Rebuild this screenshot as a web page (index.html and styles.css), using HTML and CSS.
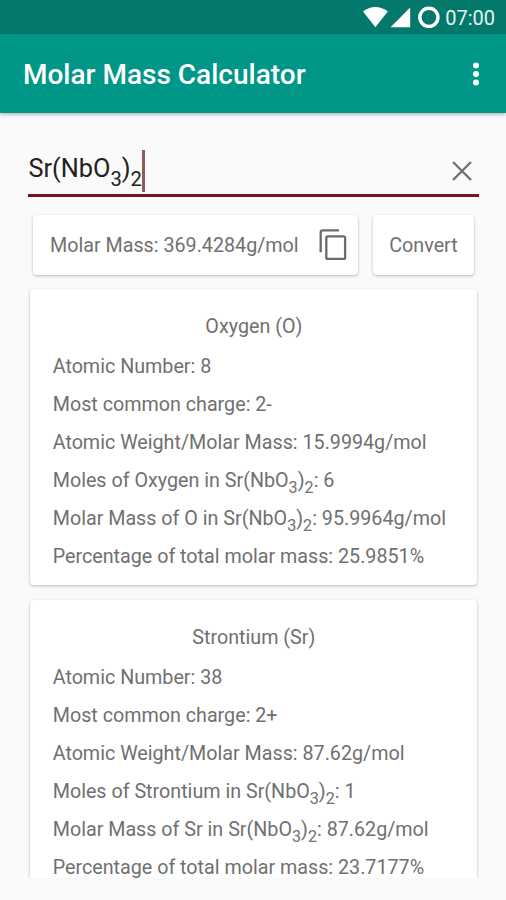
FILE: index.html
```html
<!DOCTYPE html>
<html lang="en">
<head>
<meta charset="utf-8">
<title>Molar Mass Calculator</title>
<link rel="stylesheet" href="styles.css">
</head>
<body>
<div class="status">
  <svg class="status-icons" width="80" height="34" viewBox="0 0 80 34" fill="#fff">
    <path d="M0 11.500Q5.800 7 12.400 7T24.800 11.500L12.400 27.300Z"/>
    <path d="M47.200 7.500V27.300H27.500Z"/>
    <circle cx="65.900" cy="17.300" r="9.100" fill="none" stroke="#fff" stroke-width="3.400"/>
  </svg>
  <span class="clock">07:00</span>
</div>
<header class="appbar">
  <h1>Molar Mass Calculator</h1>
  <svg width="6" height="24" viewBox="0 0 6 24" fill="#fff"><circle cx="3" cy="3.500" r="3"/><circle cx="3" cy="12" r="3"/><circle cx="3" cy="20.500" r="3"/></svg>
</header>
<main class="content">
  <div class="field">
    <span class="formula">Sr(NbO<sub>3</sub>)<sub>2</sub></span><span class="caret"></span>
    <svg class="clear" width="20" height="20" viewBox="0 0 20 20" fill="none" stroke="#707070" stroke-width="2.300"><path d="M1 1L19 19M19 1L1 19"/></svg>
  </div>
  <div class="actions">
    <div class="box result">
      <span class="mass">Molar Mass: 369.4284g/mol</span>
      <svg width="28" height="32" viewBox="0 0 28 32" fill="none" stroke="#6b6b6b" stroke-width="2.300"><path d="M1.700 23.300V3.400Q1.700 1.400 3.700 1.400H20"/><rect x="7.300" y="7.400" width="18.800" height="22.500" rx="1.500"/></svg>
    </div>
    <div class="box convert">Convert</div>
  </div>
  <div class="list">
    <section class="box card">
      <h2>Oxygen (O)</h2>
      <p>Atomic Number: 8</p>
      <p>Most common charge: 2-</p>
      <p>Atomic Weight/Molar Mass: 15.9994g/mol</p>
      <p>Moles of Oxygen in Sr(NbO<sub>3</sub>)<sub>2</sub>: 6</p>
      <p>Molar Mass of O in Sr(NbO<sub>3</sub>)<sub>2</sub>: 95.9964g/mol</p>
      <p>Percentage of total molar mass: 25.9851%</p>
    </section>
    <section class="box card">
      <h2>Strontium (Sr)</h2>
      <p>Atomic Number: 38</p>
      <p>Most common charge: 2+</p>
      <p>Atomic Weight/Molar Mass: 87.62g/mol</p>
      <p>Moles of Strontium in Sr(NbO<sub>3</sub>)<sub>2</sub>: 1</p>
      <p>Molar Mass of Sr in Sr(NbO<sub>3</sub>)<sub>2</sub>: 87.62g/mol</p>
      <p>Percentage of total molar mass: 23.7177%</p>
    </section>
  </div>
</main>
</body>
</html>
```
FILE: styles.css
```css
* { box-sizing: border-box; }
body {
  margin: 0;
  height: 900px;
  overflow: hidden;
  display: flex;
  flex-direction: column;
  background: #fafafa;
  color: #707070;
  font-family: Roboto, sans-serif;
  font-size: 19.72px;
}
h1, h2, p { margin: 0; font-weight: 400; }
sub {
  font-size: 0.82em;
  line-height: 0;
  vertical-align: -0.39em;
}
.status {
  flex: none;
  height: 34px;
  display: flex;
  align-items: center;
  justify-content: flex-end;
  padding-right: 11px;
  background: #03796b;
  color: #e6f3f1;
}
.status-icons { margin-right: 2px; }
.clock { font-size: 20px; line-height: 34px; padding-top: 2px; }
.appbar {
  flex: none;
  height: 79px;
  display: flex;
  align-items: center;
  justify-content: space-between;
  padding: 0 27px 0 23px;
  background: #009688;
  color: #fff;
  box-shadow: 0 1px 4px rgba(0, 0, 0, 0.35);
}
.appbar h1 { font-size: 28px; font-weight: 500; line-height: 40px; padding-top: 2px; }
.content {
  flex: none;
  height: 765px;
  padding: 32px 28px 0;
  display: flex;
  flex-direction: column;
  overflow: hidden;
}
.field {
  flex: none;
  height: 52px;
  display: flex;
  align-items: flex-start;
  margin-right: -1px;
  border-bottom: 3px solid #6f171d;
  color: #212121;
}
.formula { width: 114px; padding-left: 0.500px; font-size: 25.300px; line-height: 48px; white-space: nowrap; }
.formula sub { font-size: 0.8em; vertical-align: -0.45em; }
.caret { width: 3px; height: 42px; margin-top: 5px; background: #8f5d5b; }
.clear { margin: 16px 7px 0 auto; }
.box {
  background: #fff;
  border-radius: 4px;
  box-shadow: 0 1px 3px rgba(0, 0, 0, 0.27);
}
.actions { flex: none; display: flex; gap: 15px; padding: 18px 4px 0 5px; height: 78px; }
.result { flex: 1; display: flex; align-items: center; justify-content: space-between; padding: 0 11px 0 17px; }
.convert { width: 101px; display: flex; align-items: center; justify-content: center; }
.list { padding: 14px 1px 0 2px; flex: 1; min-height: 0; }
.card { height: 296px; margin-bottom: 15px; padding: 18px 22px 0 22.700px; }
.card h2 { font-size: inherit; text-align: center; line-height: 40px; margin-bottom: 1px; }
.card p { line-height: 38px; white-space: nowrap; }
```
